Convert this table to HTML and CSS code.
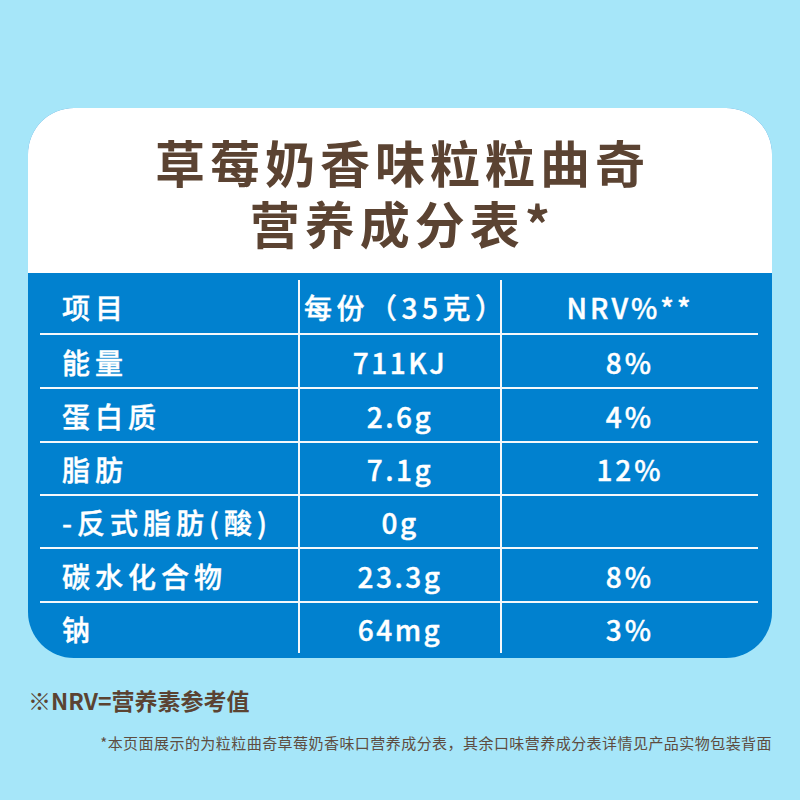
FILE: index.html
```html
<!DOCTYPE html>
<html lang="zh">
<head>
<meta charset="utf-8">
<link rel="stylesheet" href="styles.css">
</head>
<body>
<div class="card">
  <div class="head">
    <h1 class="title">草莓奶香味粒粒曲奇<br>营养成分表*</h1>
  </div>
  <div class="tablewrap">
    <div class="table">
      <div class="cell c1">项目</div><div class="cell c2 cjk">每份（35克）</div><div class="cell c3">NRV%**</div>
      <div class="cell c1">能量</div><div class="cell c2">711KJ</div><div class="cell c3">8%</div>
      <div class="cell c1">蛋白质</div><div class="cell c2">2.6g</div><div class="cell c3">4%</div>
      <div class="cell c1">脂肪</div><div class="cell c2">7.1g</div><div class="cell c3">12%</div>
      <div class="cell c1">-反式脂肪(酸)</div><div class="cell c2">0g</div><div class="cell c3"></div>
      <div class="cell c1">碳水化合物</div><div class="cell c2">23.3g</div><div class="cell c3">8%</div>
      <div class="cell c1 last">钠</div><div class="cell c2 last">64mg</div><div class="cell c3 last">3%</div>
    </div>
  </div>
</div>
<p class="note">※NRV=营养素参考值</p>
<p class="small">*本页面展示的为粒粒曲奇草莓奶香味口营养成分表，其余口味营养成分表详情见产品实物包装背面</p>
</body>
</html>
```
FILE: styles.css
```css
html, body {
  margin: 0;
  padding: 0;
}
body {
  background: #a6e6f9;
  width: 800px;
  height: 800px;
  overflow: hidden;
  font-family: "Noto Sans CJK SC", "Noto Sans", sans-serif;
}
.card {
  margin: 108px 28px 0;
  border-radius: 46px;
  overflow: hidden;
  background: #0181cf;
}
.head {
  background: #fff;
  height: 165px;
  display: flex;
  align-items: center;
  justify-content: center;
}
.title {
  margin: 0;
  padding-top: 2px;
  padding-left: 5px;
  text-align: center;
  color: #5b4332;
  font-size: 50px;
  font-weight: 700;
  line-height: 61px;
  letter-spacing: 5px;
}
.tablewrap {
  padding: 7px 14px 5px 12px;
}
.table {
  display: grid;
  grid-template-columns: 260px 202px 1fr;
  grid-template-rows: 55px 54px 54px 53px 53px 54px 50px;
}
.cell {
  color: #fff;
  font-size: 28px;
  font-weight: 500;
  letter-spacing: 2.5px;
  -webkit-text-stroke: 0.4px #fff;
  display: flex;
  align-items: center;
  border-bottom: 2px solid #f4f8fb;
  box-sizing: border-box;
  padding-top: 1px;
}
.c1 {
  padding-left: 22px;
  letter-spacing: 5px;
  border-right: 2px solid #f4f8fb;
}
.c2 {
  justify-content: center;
  border-right: 2px solid #f4f8fb;
}
.c2.cjk {
  letter-spacing: 4.5px;
  padding-left: 4px;
}
.c3 {
  justify-content: center;
  letter-spacing: 3px;
}
.last {
  border-bottom: none;
}
.note {
  margin: 26px 0 0 28px;
  color: #5b4332;
  font-size: 23px;
  font-weight: 700;
  line-height: 32px;
}
.small {
  margin: 16px 28px 0 0;
  text-align: right;
  color: #5e4c40;
  font-size: 15px;
  line-height: 22px;
  letter-spacing: 0.45px;
}
```
